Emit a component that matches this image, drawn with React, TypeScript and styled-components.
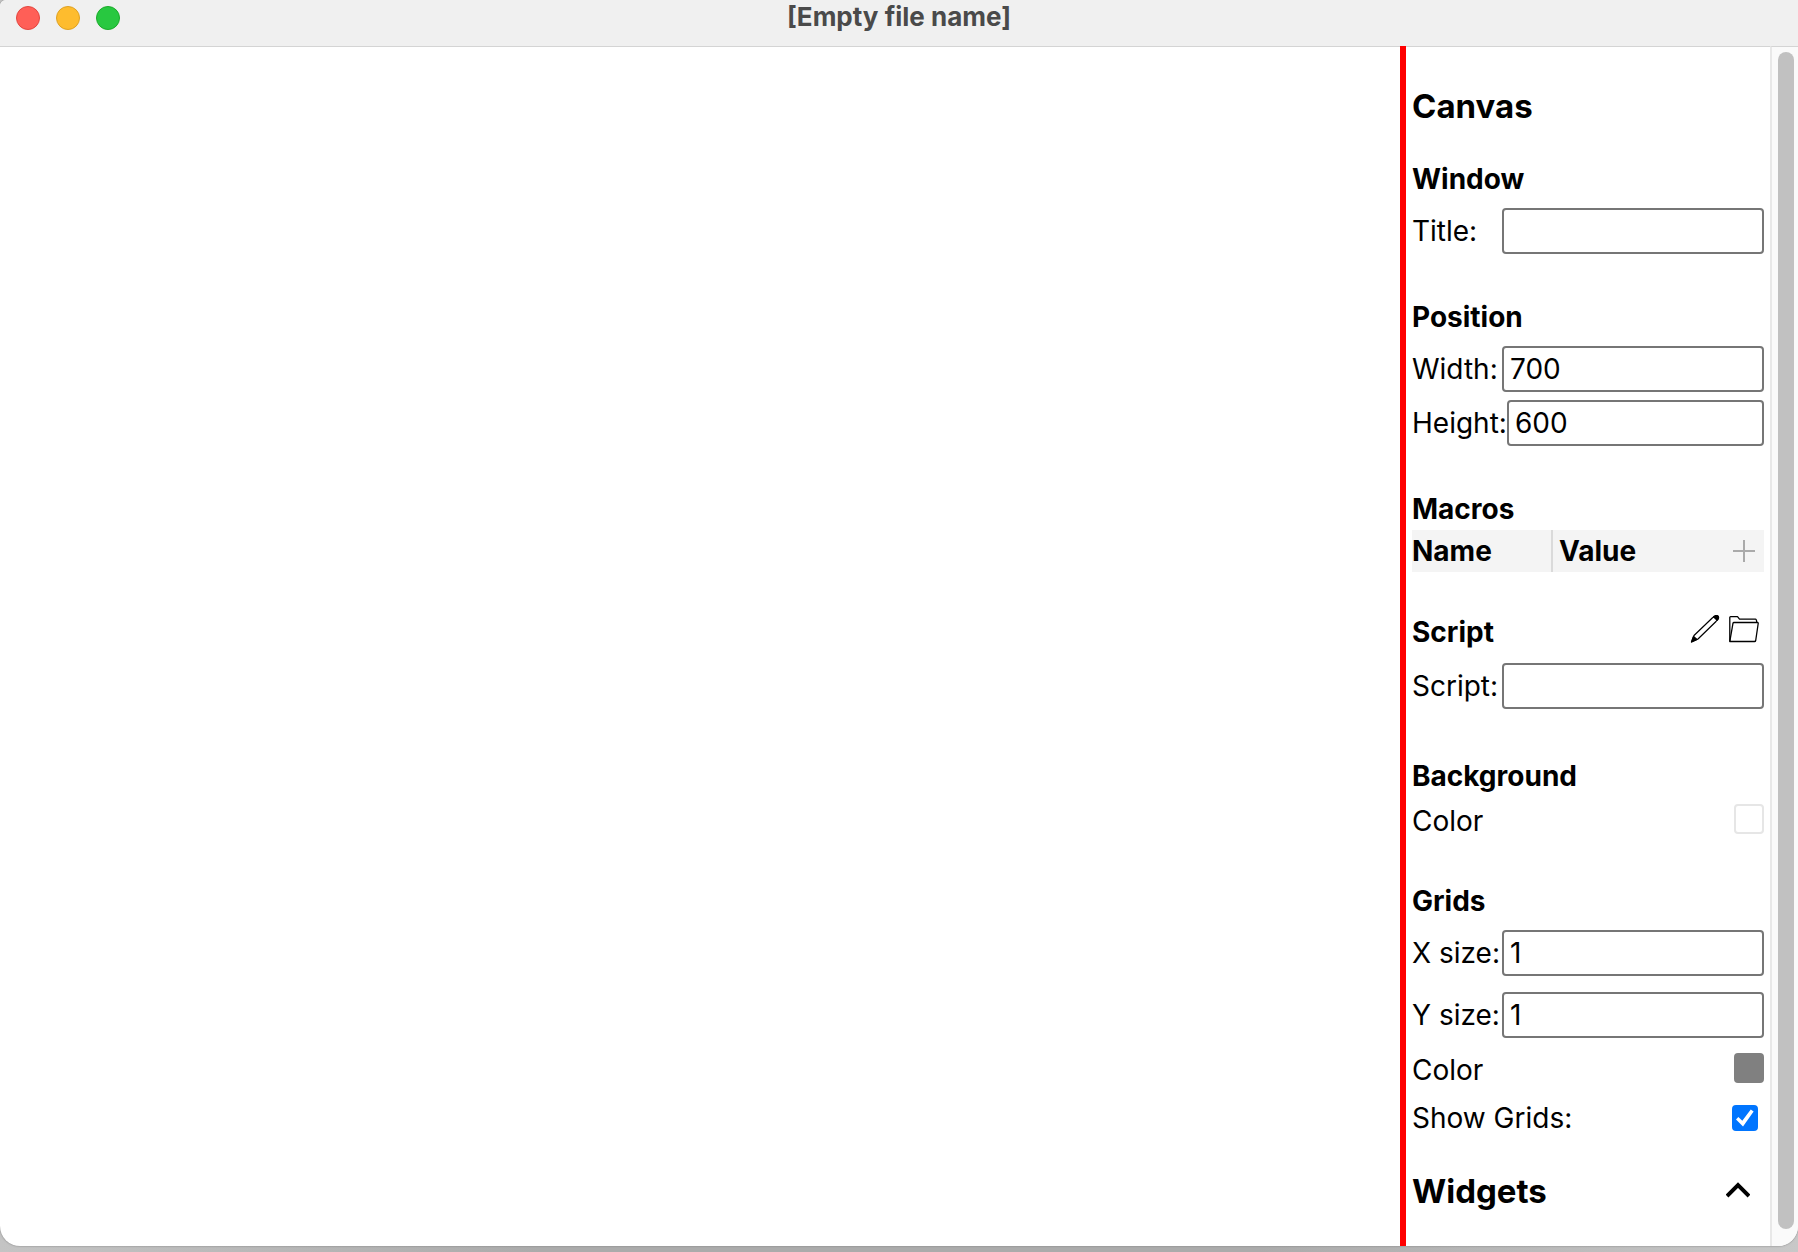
import React, { useState } from "react";
import styled, { createGlobalStyle } from "styled-components";

const GlobalStyle = createGlobalStyle`
  *, *::before, *::after { box-sizing: border-box; }
  body {
    margin: 0;
    background: linear-gradient(90deg, #c4c4c4, #ababab 30%, #ababab 70%, #c8c8c8);
    color: #000;
    font-family: Inter, "Liberation Sans", sans-serif;
    font-size: 28px;
    line-height: 34px;
  }
`;

const Frame = styled.div`
  display: flex;
  flex-direction: column;
  height: 100vh;
  padding-bottom: 6px;
`;

const AppWindow = styled.div`
  display: flex;
  flex: 1;
  flex-direction: column;
  min-height: 0;
  overflow: hidden;
  background: #fff;
  border-radius: 6px 0 20px 20px;
  box-shadow: 0 0 2px #777;
`;

const TitleBar = styled.header`
  display: grid;
  grid-template-columns: 1fr auto 1fr;
  flex: none;
  height: 46px;
  padding: 0 16px;
  background: #f0f0f0;
`;

const Lights = styled.div`
  display: flex;
  gap: 16px;
  padding-top: 6px;
`;

const Light = styled.button<{ $fill: string; $edge: string }>`
  width: 24px;
  height: 24px;
  padding: 0;
  border: 1px solid ${(p) => p.$edge};
  border-radius: 50%;
  background: ${(p) => p.$fill};
`;

const FileName = styled.h1`
  margin: 0;
  color: #4a4a4a;
  font-size: 26px;
  font-weight: 700;
  line-height: 34px;
`;

const Workspace = styled.div`
  display: flex;
  flex: 1;
  min-height: 0;
`;

const Canvas = styled.main`
  flex: 1;
  min-width: 0;
  border-top: 1px solid #d4d4d4;
`;

const Sidebar = styled.aside`
  display: flex;
  flex: none;
  width: 398px;
  border-left: 6px solid #f00;
`;

const Panel = styled.div`
  flex: 1;
  min-width: 0;
  padding: 39px 6px 0;
  overflow: hidden;
  border-top: 1px solid #d4d4d4;
`;

const Track = styled.div`
  flex: none;
  width: 28px;
  padding: 5px 4px 17px 6px;
  background: #fafafa;
  border-top: 1px solid #d4d4d4;
  border-left: 2px solid #e8e8e8;
`;

const Thumb = styled.div`
  height: 100%;
  border-radius: 8px;
  background: #c1c1c1;
`;

const PanelTitle = styled.h2`
  margin: 0;
  font-size: 33px;
  font-weight: 700;
  line-height: 40px;
`;

const PanelHead = styled.div`
  display: flex;
  align-items: center;
  justify-content: space-between;
  padding-right: 14px;
  margin-top: 36px;
`;

const Section = styled.section<{ $space?: number }>`
  margin-top: ${(p) => p.$space ?? 46}px;
`;

const SectionHead = styled.div`
  display: flex;
  justify-content: space-between;
`;

const SectionTitle = styled.h3`
  margin: 0;
  font-size: 28px;
  font-weight: 700;
  line-height: 34px;
`;

const Rows = styled.div<{ $top?: number; $gap?: number }>`
  display: flex;
  flex-direction: column;
  gap: ${(p) => p.$gap ?? 8}px;
  padding-top: ${(p) => p.$top ?? 12}px;
`;

const Row = styled.div`
  display: flex;
  align-items: center;
`;

const SpreadRow = styled.div`
  display: flex;
  align-items: flex-start;
  justify-content: space-between;
`;

const Label = styled.label`
  flex: none;
  min-width: 90px;
`;

const TextBox = styled.input`
  flex: 1;
  min-width: 0;
  height: 46px;
  padding: 0 6px;
  border: 2px solid #767676;
  border-radius: 4px;
  background: #fff;
  color: #000;
  font: inherit;
`;

const Swatch = styled.button<{ $fill: string; $edge: string }>`
  width: 30px;
  height: 30px;
  padding: 0;
  border: 2px solid ${(p) => p.$edge};
  border-radius: 4px;
  background: ${(p) => p.$fill};
`;

const CheckBox = styled.input`
  appearance: none;
  display: grid;
  place-items: center;
  width: 26px;
  height: 26px;
  margin: 4px 6px 4px 0;
  border: 2px solid #767676;
  border-radius: 4px;
  background: #fff;
  &:checked {
    border-color: #0075ff;
    background: #0075ff;
  }
  &:checked::before {
    content: "";
    width: 18px;
    height: 18px;
    background: #fff;
    clip-path: polygon(0% 58%, 13% 45%, 35% 65%, 82% 3%, 98% 14%, 39% 97%);
  }
`;

const MacroTable = styled.table`
  width: 100%;
  height: 42px;
  margin-top: 4px;
  border-collapse: collapse;
  background: #f4f4f4;
  table-layout: fixed;
`;

const MacroHead = styled.th<{ $width?: string; $divided?: boolean }>`
  width: ${(p) => p.$width ?? "auto"};
  padding: ${(p) => (p.$divided ? "0 8px 0 6px" : "0")};
  border-left: ${(p) => (p.$divided ? "2px solid #dadada" : "none")};
  font-weight: 700;
  text-align: left;
`;

const HeadCell = styled.div`
  display: flex;
  align-items: center;
  justify-content: space-between;
`;

const IconButton = styled.button`
  display: flex;
  padding: 0;
  border: 0;
  background: none;
  color: #000;
`;

const Tools = styled.div`
  display: flex;
  align-items: flex-start;
  gap: 9px;
  padding-right: 5px;
`;

const PlusIcon = () => (
  <svg width="24" height="24" viewBox="0 0 24 24" fill="none" stroke="#aaa" strokeWidth="2">
    <path d="M12 1v22M1 12h22" />
  </svg>
);

const PencilIcon = () => (
  <svg width="30" height="30" viewBox="0 0 30 30" fill="none" stroke="#000" strokeWidth="1.2" strokeLinejoin="round">
    <path d="M1.5 27 4 20.500 22.500 2.700 26 .7Q29 .5 28.300 3.500L26 6.500 8 24Z" />
    <path d="M1.500 27 3.500 21.500 7 24.500Z" fill="#000" />
    <path d="M23.500 1.700Q26 -.3 28 1 29.500 3 27.200 5.300Z" fill="#000" />
  </svg>
);

const FolderIcon = () => (
  <svg width="30" height="30" viewBox="0 0 30 30" fill="none" stroke="#000" strokeWidth="1.3" strokeLinejoin="round">
    <path d="M.8 26.500V2.500Q.8 1.700 1.600 1.700H8.500L10.500 4.200H26.500Q27.500 4.200 27.800 7.500" />
    <path d="M.8 26.500 4 8.200Q4.200 7.500 5 7.500H28.500Q29.400 7.500 29.200 8.500L26.700 25.500Q26.500 26.500 25.500 26.500Z" />
  </svg>
);

const ChevronIcon = () => (
  <svg width="24" height="18" viewBox="0 0 24 18" fill="none" stroke="#000" strokeWidth="4">
    <path d="M1 14 12 3 23 14" />
  </svg>
);

function Field({ id, label, initial = "" }: { id: string; label: string; initial?: string }) {
  const [value, setValue] = useState(initial);
  return (
    <Row>
      <Label htmlFor={id}>{label}</Label>
      <TextBox id={id} type="text" value={value} onChange={(e) => setValue(e.target.value)} />
    </Row>
  );
}

export default function App() {
  const [showGrids, setShowGrids] = useState(true);
  return (
    <Frame>
      <GlobalStyle />
      <AppWindow>
        <TitleBar>
          <Lights>
            <Light type="button" aria-label="Close" $fill="#ff5f57" $edge="#e2463f" />
            <Light type="button" aria-label="Minimize" $fill="#febc2e" $edge="#dea123" />
            <Light type="button" aria-label="Zoom" $fill="#28c840" $edge="#1aab29" />
          </Lights>
          <FileName>[Empty file name]</FileName>
        </TitleBar>
        <Workspace>
          <Canvas />
          <Sidebar>
            <Panel>
              <PanelTitle>Canvas</PanelTitle>
              <Section $space={36}>
                <SectionTitle>Window</SectionTitle>
                <Rows>
                  <Field id="title" label="Title:" />
                </Rows>
              </Section>
              <Section>
                <SectionTitle>Position</SectionTitle>
                <Rows>
                  <Field id="width" label="Width:" initial="700" />
                  <Field id="height" label="Height:" initial="600" />
                </Rows>
              </Section>
              <Section>
                <SectionTitle>Macros</SectionTitle>
                <MacroTable>
                  <thead>
                    <tr>
                      <MacroHead $width="140px">Name</MacroHead>
                      <MacroHead $divided>
                        <HeadCell>
                          Value
                          <IconButton type="button" aria-label="Add macro">
                            <PlusIcon />
                          </IconButton>
                        </HeadCell>
                      </MacroHead>
                    </tr>
                  </thead>
                </MacroTable>
              </Section>
              <Section $space={43}>
                <SectionHead>
                  <SectionTitle>Script</SectionTitle>
                  <Tools>
                    <IconButton type="button" aria-label="Edit script">
                      <PencilIcon />
                    </IconButton>
                    <IconButton type="button" aria-label="Open script">
                      <FolderIcon />
                    </IconButton>
                  </Tools>
                </SectionHead>
                <Rows $top={14}>
                  <Field id="script" label="Script:" />
                </Rows>
              </Section>
              <Section $space={50}>
                <SectionTitle>Background</SectionTitle>
                <Rows $top={11}>
                  <SpreadRow>
                    <span>Color</span>
                    <Swatch type="button" aria-label="Background color" $fill="#fff" $edge="#e6e6e6" />
                  </SpreadRow>
                </Rows>
              </Section>
              <Section>
                <SectionTitle>Grids</SectionTitle>
                <Rows $gap={16}>
                  <Field id="x-size" label="X size:" initial="1" />
                  <Field id="y-size" label="Y size:" initial="1" />
                </Rows>
                <Rows $top={15} $gap={14}>
                  <SpreadRow>
                    <span>Color</span>
                    <Swatch type="button" aria-label="Grid color" $fill="#808080" $edge="#808080" />
                  </SpreadRow>
                  <SpreadRow>
                    <label htmlFor="show-grids">Show Grids:</label>
                    <CheckBox
                      id="show-grids"
                      type="checkbox"
                      checked={showGrids}
                      onChange={(e) => setShowGrids(e.target.checked)}
                    />
                  </SpreadRow>
                </Rows>
              </Section>
              <PanelHead>
                <PanelTitle>Widgets</PanelTitle>
                <IconButton type="button" aria-label="Collapse widgets">
                  <ChevronIcon />
                </IconButton>
              </PanelHead>
            </Panel>
            <Track>
              <Thumb />
            </Track>
          </Sidebar>
        </Workspace>
      </AppWindow>
    </Frame>
  );
}
